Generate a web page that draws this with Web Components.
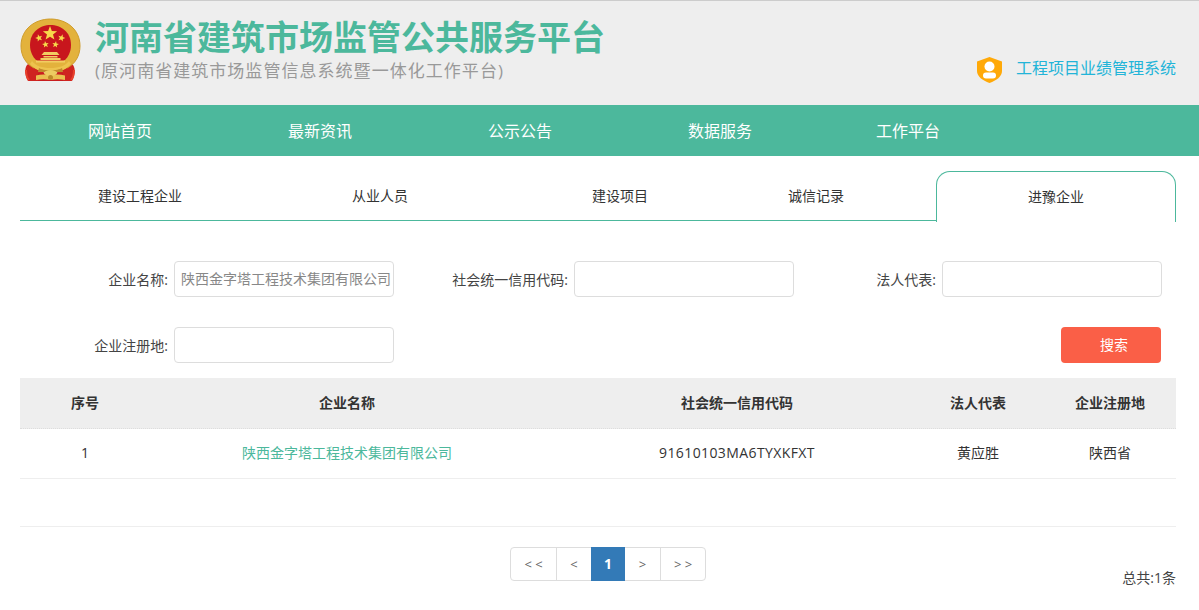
<!DOCTYPE html>
<html lang="zh"><head><meta charset="utf-8"><title>河南省建筑市场监管公共服务平台</title>
<style>
html,body{margin:0;padding:0;background:#fff}
body{font-family:"Open Sans","Noto Sans CJK SC",sans-serif;font-size:14px;color:#333;width:1199px;height:610px;overflow:hidden}
</style></head><body>
<site-header></site-header>
<site-nav></site-nav>
<main-panel>
<tab-bar></tab-bar>
<search-form></search-form>
<result-table></result-table>
<pager-bar></pager-bar>
</main-panel>
<script>
function def(name,html){customElements.define(name,class extends HTMLElement{constructor(){super();this.attachShadow({mode:'open'}).innerHTML=html}})}
function star(cx,cy,r,rot){let d='';for(let i=0;i<10;i++){const a=-Math.PI/2+(rot||0)+i*Math.PI/5,q=i%2?r*.42:r;d+=(i?'L':'M')+(cx+q*Math.cos(a)).toFixed(2)+' '+(cy+q*Math.sin(a)).toFixed(2)}return `<path d="${d}Z" fill="#f7d94a"/>`}
const emblem=`<svg class="e" viewBox="0 0 62 66">
<path d="M9 46C4 50 7 60 9 63h13l4-8zM53 46c5 4 2 14 0 17H41l-4-8z" fill="#cf2420"/>
<path d="M7 52c0 4 1 8 3 10M55 52c0 4-1 8-3 10" stroke="#e8402c" stroke-width="2" fill="none"/>
<path d="M31.500 1C47 1 61 11 61 28c0 10-5 18-13 22l-6 3H21l-6-3C7 46 2 38 2 28 2 11 16 1 31.500 1z" fill="#e3b23c"/>
<path d="M31.500 1C47 1 61 11 61 28c0 10-5 18-13 22M31.500 1C16 1 2 11 2 28c0 10 5 18 13 22" fill="none" stroke="#cf9c2c" stroke-width="1"/>
<path d="M31.500 7C42 7 52 14 52 27c0 7-3 12-6 15l-3 2H20l-3-2c-3-3-6-8-6-15C11 14 21 7 31.500 7z" fill="#c8161d"/>
${star(31,15.500,7.500)}${star(20,20,3.800,-.3)}${star(42.500,20,3.800,.3)}${star(26.500,26.500,3.500,-.15)}${star(36.500,26.500,3.500,.15)}
<path d="M25 34h13l2.500 3H22.500zM24.500 38h14v1.500h-14zM21.500 40h20v2h-20zM17 42.500h29v2H17z" fill="#f1cd62"/>
<path d="M13 43c4 5 10 7 18.500 7S46 48 50 43l2 3c-4 5-11 8-20.500 8S15 51 11 46z" fill="#edc34e"/>
<path d="M20 50c4 3 19 3 23 0l1 4H19z" fill="#c08a2c"/>
<path d="M19 55h25v8H19z" fill="#c81c1f"/>
<path d="M17 57.500c5-1.500 10-1.500 14.500 0 4.500-1.500 9.500-1.500 14.500 0v4.500c-5-1-10-1-14.500 0-4.500-1-9.500-1-14.500 0z" fill="#e9c050"/>
<ellipse cx="31.500" cy="55" rx="6.500" ry="3" fill="#eccb62"/><circle cx="31.500" cy="59.500" r="2.500" fill="#bd8a2a"/>
</svg>`;
def('site-header',`<style>
:host{display:flex;height:104px;background:#eee;border-top:1px solid #ccc;padding-left:19px;padding-right:23px;align-items:flex-start}
svg.e{width:62px;height:66px;margin-top:17px;flex:none}
.t{margin-left:14px;margin-top:14px}
h1{margin:0;font-size:34px;line-height:44px;font-weight:700;color:#4cb89c;white-space:nowrap}
p{margin:0;font-size:17px;line-height:24px;color:#999;letter-spacing:1.04px;white-space:nowrap}
.r{margin-left:auto;margin-top:55px;display:flex;align-items:flex-start;color:#22b4d8;font-size:16px;line-height:24px}
.r svg{width:25px;height:26px;margin-top:1px;margin-right:14px}
</style>
${emblem}
<div class="t"><h1>河南省建筑市场监管公共服务平台</h1><p>(原河南省建筑市场监管信息系统暨一体化工作平台)</p></div>
<div class="r"><svg viewBox="0 0 25 26"><path d="M12.500 0L25 4.500V14c0 5.500-5.500 9.500-12.500 12C5.500 23.500 0 19.500 0 14V4.500z" fill="#ffa908"/><circle cx="12.500" cy="9.500" r="5" fill="#fff"/><rect x="6" y="15.500" width="13" height="6" rx="3" fill="#fff"/></svg><span>工程项目业绩管理系统</span></div>`);
def('site-nav',`<style>
:host{display:flex;height:51px;background:#4cb89c;padding-left:20px;color:#fff;font-size:16px;line-height:53px}
span{width:200px;text-align:center}span:last-child{width:176px}
</style><span>网站首页</span><span>最新资讯</span><span>公示公告</span><span>数据服务</span><span>工作平台</span>`);
def('main-panel',`<style>:host{display:block;padding:15px 23px 0 20px}</style><slot></slot>`);
def('tab-bar',`<style>
:host{display:flex;height:49px;border-bottom:1px solid #4cb89c;font-size:14px;line-height:50px}
span{text-align:center;width:240px}
span.s{width:152px}
.a{margin-left:auto;box-sizing:border-box;height:51px;border:1px solid #4cb89c;border-bottom:0;border-radius:14px 14px 0 0;background:#fff;line-height:50px}
</style><span>建设工程企业</span><span>从业人员</span><span>建设项目</span><span class="s">诚信记录</span><span class="a">进豫企业</span>`);
def('form-field',`<style>
:host{display:flex;align-items:center;height:36px}
label{font-size:14px;color:#444;text-align:right;white-space:nowrap;margin-right:6px;width:var(--lw)}
div{box-sizing:border-box;width:220px;height:36px;border:1px solid #ddd;border-radius:4px;padding:0 0 0 6px;line-height:34px;color:#888;font-size:14px;white-space:nowrap;overflow:hidden}
</style><label><slot name="l"></slot></label><div><slot></slot></div>`);
def('search-form',`<style>
:host{display:block;padding:40px 0 0 0}
.row{display:flex;align-items:center}
.row+.row{margin-top:30px;margin-bottom:15px}
.b{box-sizing:border-box;width:100px;height:36px;padding-left:6px;background:#fa5f47;border-radius:4px;color:#fff;text-align:center;line-height:36px;font-size:14px;margin-left:auto;margin-right:15px}
</style><div class="row"><form-field style="--lw:148px"><span slot="l">企业名称:</span>陕西金字塔工程技术集团有限公司</form-field><form-field style="--lw:174px"><span slot="l">社会统一信用代码:</span></form-field><form-field style="--lw:142px"><span slot="l">法人代表:</span></form-field></div>
<div class="row"><form-field style="--lw:148px"><span slot="l">企业注册地:</span></form-field><div class="b">搜索</div></div>`);
def('result-table',`<style>
:host{display:block;font-size:14px}
.r{display:grid;grid-template-columns:130px 412px 350px 132px 132px;text-align:center}
.r span:nth-child(2){padding-right:18px}
.h{height:51px;line-height:50px;background:#eee;font-weight:700;font-size:14px;border-bottom:1px dotted #ddd;box-sizing:border-box}
.d{height:50px;line-height:47px;border-bottom:1px solid #eee;box-sizing:border-box}
.g{color:#4cb89c}
.c{letter-spacing:.4px}
.e{height:47px;border-bottom:1px solid #eee}
</style><div class="r h"><span>序号</span><span>企业名称</span><span>社会统一信用代码</span><span>法人代表</span><span>企业注册地</span></div>
<div class="r d"><span>1</span><span class="g">陕西金字塔工程技术集团有限公司</span><span class="c">91610103MA6TYXKFXT</span><span>黄应胜</span><span>陕西省</span></div><div class="e"></div>`);
def('pager-bar',`<style>
:host{display:flex;position:relative;justify-content:center;padding:20px 0 0 20px;height:63px;box-sizing:border-box;font-size:13px}
.p{display:flex;height:34px;border:1px solid #ddd;border-radius:4px;box-sizing:border-box;color:#666}
.p span{display:block;text-align:center;line-height:32px;border-left:1px solid #ddd;box-sizing:border-box}
.p span:first-child{border-left:0}
.p .c{background:#337ab7;color:#fff;border:0;width:34px;height:34px;margin-top:-1px;font-weight:700;font-size:14px;line-height:34px}
.p .n{border-left:0}
.t{position:absolute;right:0;top:41px;font-size:14px;color:#444;line-height:20px}
</style><div class="p"><span style="width:45px">&lt; &lt;</span><span style="width:35px">&lt;</span><span class="c">1</span><span class="n" style="width:35px">&gt;</span><span style="width:45px">&gt; &gt;</span></div><div class="t">总共:1条</div>`);
</script>
</body></html>
